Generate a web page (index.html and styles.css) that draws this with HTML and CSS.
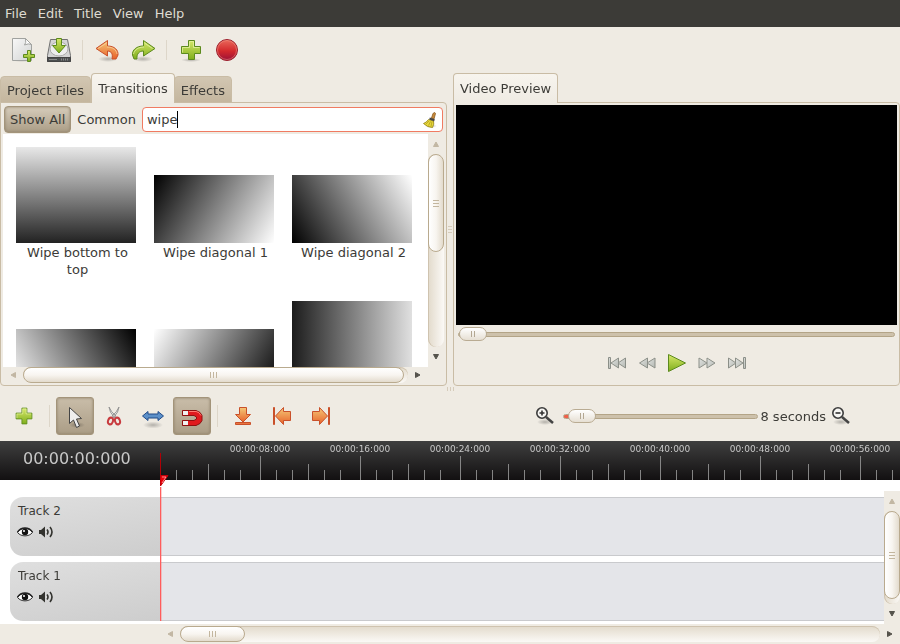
FILE: index.html
```html
<!DOCTYPE html>
<html lang="en">
<head>
<meta charset="utf-8">
<title>Video Editor</title>
<link rel="stylesheet" href="styles.css">
</head>
<body>
<svg class="defs" width="0" height="0" aria-hidden="true">
  <defs>
    <linearGradient id="green" x1="0" y1="0" x2="0" y2="1"><stop offset="0" stop-color="#d6e86a"/><stop offset="1" stop-color="#7fae1c"/></linearGradient>
    <linearGradient id="orange" x1="0" y1="0" x2="0" y2="1"><stop offset="0" stop-color="#f4c878"/><stop offset="1" stop-color="#e8622a"/></linearGradient>
    <linearGradient id="red" x1="0" y1="0" x2="0" y2="1"><stop offset="0" stop-color="#ea6a5c"/><stop offset=".55" stop-color="#d3282c"/><stop offset="1" stop-color="#9a1038"/></linearGradient>
    <linearGradient id="paper" x1="0" y1="0" x2="1" y2="1"><stop offset="0" stop-color="#f8f8f8"/><stop offset="1" stop-color="#d2d4d3"/></linearGradient>
    <linearGradient id="media" x1="0" y1="0" x2="1" y2="1"><stop offset="0" stop-color="#e2e4e2"/><stop offset="1" stop-color="#b4b8b2"/></linearGradient>
    <radialGradient id="shade"><stop offset="0" stop-color="#000" stop-opacity=".25"/><stop offset="1" stop-color="#000" stop-opacity="0"/></radialGradient>
    <symbol id="plus" viewBox="0 0 24 24">
      <path d="M9.500 2.500h6v6h6v7h-6v6h-6v-6h-7v-7h7z" fill="url(#green)" stroke="#5c8a1e"/>
      <path d="M3.500 14.500v-5h7v-6h4v6h6" fill="none" stroke="#eaf5a8" stroke-opacity=".7"/>
    </symbol>
    <symbol id="eye" viewBox="0 0 16 12">
      <path d="M.500 6.500C4 1 12 1 15.500 6.500 12 11 4 11 .500 6.500z" fill="#fff" stroke="#333" stroke-width="1"/>
      <path d="M.500 6C4 .500 12 .500 15.500 6" fill="none" stroke="#222" stroke-width="1.500"/>
      <circle cx="8" cy="6" r="3.200" fill="#111"/><circle cx="7" cy="5" r="1" fill="#fff"/>
    </symbol>
    <symbol id="speaker" viewBox="0 0 16 12">
      <path d="M1 4h2l4-3.500v11L3 8H1z" fill="#33332f"/>
      <path d="M9 3.500q2 2.500 0 5M12 1q4 5 0 10" fill="none" stroke="#33332f" stroke-width="1.600"/>
    </symbol>
    <symbol id="ticks" viewBox="0 0 100 24">
      <path d="M.500 0v24M16.500 14v10M32.500 14v10M48.500 8v16M64.500 14v10M80.500 14v10" stroke="#858585" fill="none"/>
    </symbol>
    <symbol id="arrow" viewBox="0 0 8 8"><path d="M1.500 6.500L4 2 6.500 6.500z" fill="currentColor" stroke="currentColor"/></symbol>
  </defs>
</svg>

<nav class="menubar" aria-label="Main menu">
  <button>File</button><button>Edit</button><button>Title</button><button>View</button><button>Help</button>
</nav>

<div class="toolbar">
  <button class="tool" aria-label="New project">
    <svg width="24" height="24" viewBox="0 0 24 24"><ellipse cx="11" cy="22" rx="11" ry="2" fill="url(#shade)"/><path d="M1.500 .500h13l6 6v16h-19z" fill="url(#paper)" stroke="#a0a29f"/><path d="M14.500 .500q1 4.500-1 6.500 4-2 7-.500z" fill="#fff" stroke="#a0a29f"/><path d="M16.500 12.500h3v4h4v3h-4v4h-3v-4h-4v-3h4z" fill="url(#green)" stroke="#5c8a1e"/></svg>
  </button>
  <button class="tool" aria-label="Save project">
    <svg width="26" height="26" viewBox="0 0 26 26"><path d="M4.500 2.500h17l3 16v6h-23v-6z" fill="#d4d4d4" stroke="#707070"/><ellipse cx="13" cy="12" rx="9" ry="7" fill="#eee" stroke="#aaa"/><path d="M1.500 20.500h23v4h-23z" fill="#4c4f50" stroke="#444"/><path d="M3 22.500h8" stroke="#888"/><path d="M15 22.500h8" stroke="#888" stroke-width="2" stroke-dasharray="1 1"/><path d="M10.500 1.500h5v7h4L13 16 6.500 8.500h4z" fill="url(#green)" stroke="#5c8a1e"/></svg>
  </button>
  <span class="sep"></span>
  <button class="tool" aria-label="Undo">
    <svg width="26" height="26" viewBox="0 0 26 26"><ellipse cx="14" cy="22" rx="10" ry="3" fill="url(#shade)"/><path d="M13.500 3.500v5.500c7 0 11 4 10.500 9l-2 4h-4c1-5-.500-8-4.500-8v5L2 11.500z" fill="url(#orange)" stroke="#c9502a"/><path d="M12.500 6L4 11.500M13 10c6 0 9.500 3 10 7" stroke="#fbd7a6" fill="none" opacity=".7"/></svg>
  </button>
  <button class="tool" aria-label="Redo">
    <svg width="26" height="26" viewBox="0 0 26 26"><ellipse cx="13" cy="22" rx="10" ry="3" fill="url(#shade)"/><path d="M13.500 3.500v5.500c-7 0-11.500 4-11 9l1.500 4h3c-.500-5 2-8 6.500-8v5L25 11.500z" fill="url(#green)" stroke="#5c8a1e"/><path d="M14.500 6l8 5.500M14 10c-6 0-9.500 3-10.500 7" stroke="#ecf6b4" fill="none" opacity=".7"/></svg>
  </button>
  <span class="sep"></span>
  <button class="tool" aria-label="Import files"><svg width="24" height="24"><ellipse cx="12" cy="22" rx="10" ry="2" fill="url(#shade)"/><use href="#plus"/></svg></button>
  <button class="tool" aria-label="Export video">
    <svg width="24" height="24" viewBox="0 0 24 24"><circle cx="12" cy="12" r="10.500" fill="url(#red)" stroke="#9c1f2c"/><circle cx="12" cy="12" r="9.500" fill="none" stroke="#f19a8c" opacity=".5"/></svg>
  </button>
</div>

<main class="workspace">
  <section class="notebook">
    <div class="tabs" role="tablist">
      <button class="tab" role="tab">Project Files</button><button class="tab selected" role="tab" aria-selected="true">Transitions</button><button class="tab" role="tab">Effects</button>
    </div>
    <div class="page">
      <div class="filters">
        <button class="filter pressed" aria-pressed="true">Show All</button>
        <button class="filter">Common</button>
        <div class="search">
          <input type="text" value="wipe" aria-label="Filter transitions" autofocus>
          <span class="caret"></span>
          <button class="clear" aria-label="Clear filter">
            <svg width="16" height="16" viewBox="0 0 16 16"><ellipse cx="9" cy="14" rx="6" ry="2" fill="url(#shade)"/><path d="M9.500 6L11 1.500q2-2 2.500 0L12 7z" fill="#c98a3c" stroke="#8a5a1e" stroke-width=".800"/><path d="M6.500 7.500L11.500 9q1 3-1 6.500-5 0-9-4 3-1 5-4z" fill="#e8d83c" stroke="#8f7f10" stroke-width=".800"/><path d="M4 12l3-3M6.500 13.500l2-4M9 14.500l1-5" stroke="#a8961c" stroke-width=".700"/><path d="M7.500 6.500l5 1.800" stroke="#444" stroke-width="2"/></svg>
          </button>
        </div>
      </div>
      <div class="browser">
        <div class="thumbs">
          <figure class="thumb"><div class="slot"><div class="pic tall bottom-top"></div></div><figcaption>Wipe bottom to top</figcaption></figure>
          <figure class="thumb"><div class="slot"><div class="pic diagonal-1"></div></div><figcaption>Wipe diagonal 1</figcaption></figure>
          <figure class="thumb"><div class="slot"><div class="pic diagonal-2"></div></div><figcaption>Wipe diagonal 2</figcaption></figure>
          <figure class="thumb"><div class="slot"><div class="pic diagonal-3"></div></div></figure>
          <figure class="thumb"><div class="slot"><div class="pic diagonal-4"></div></div></figure>
          <figure class="thumb"><div class="slot"><div class="pic tall left-right"></div></div></figure>
        </div>
        <div class="scroll vertical">
          <button class="step off" aria-label="Scroll up"><svg width="8" height="8"><use href="#arrow"/></svg></button>
          <div class="trough"><div class="handle" style="height:51%"></div></div>
          <button class="step down" aria-label="Scroll down"><svg width="8" height="8"><use href="#arrow"/></svg></button>
        </div>
        <div class="scroll horizontal">
          <button class="step left off" aria-label="Scroll left"><svg width="8" height="8"><use href="#arrow"/></svg></button>
          <div class="trough"><div class="handle" style="width:99%"></div></div>
          <button class="step right" aria-label="Scroll right"><svg width="8" height="8"><use href="#arrow"/></svg></button>
        </div>
      </div>
    </div>
  </section>

  <div class="splitter"></div>

  <section class="notebook">
    <div class="tabs" role="tablist"><button class="tab selected" role="tab" aria-selected="true">Video Preview</button></div>
    <div class="page preview">
      <div class="video"></div>
      <input class="slider" type="range" min="0" max="1000" value="0" aria-label="Position">
      <div class="transport">
        <button aria-label="Jump to start"><svg width="20" height="14" viewBox="0 0 20 14"><g fill="url(#media)" stroke="#8b8f88"><path d="M1.500 1.500h2v11h-2z"/><path d="M11.500 2v10L4 7z"/><path d="M18.500 2v10L11 7z"/></g></svg></button>
        <button aria-label="Rewind"><svg width="20" height="14" viewBox="0 0 20 14"><g fill="url(#media)" stroke="#8b8f88"><path d="M10.500 2v10L2.500 7z"/><path d="M18 2v10L10 7z"/></g></svg></button>
        <button aria-label="Play"><svg width="20" height="20" viewBox="0 0 20 20"><path d="M1.500 1.500L18.500 10 1.500 18.500z" fill="url(#green)" stroke="#5c8a1e"/></svg></button>
        <button aria-label="Fast forward"><svg width="20" height="14" viewBox="0 0 20 14"><g fill="url(#media)" stroke="#8b8f88"><path d="M10 2v10l8-5z"/><path d="M2 2v10l8-5z"/></g></svg></button>
        <button aria-label="Jump to end"><svg width="20" height="14" viewBox="0 0 20 14"><g fill="url(#media)" stroke="#8b8f88"><path d="M16.500 1.500h2v11h-2z"/><path d="M8.500 2v10L16 7z"/><path d="M1.500 2v10L9 7z"/></g></svg></button>
      </div>
    </div>
  </section>
</main>
<div class="splitter row"></div>

<div class="toolbar edit">
  <button class="tool" aria-label="Add track"><svg width="20" height="20"><use href="#plus"/></svg></button>
  <span class="sep"></span>
  <button class="tool pressed" aria-label="Select" aria-pressed="true">
    <svg width="24" height="24" viewBox="0 0 24 24"><ellipse cx="14" cy="21" rx="8" ry="3" fill="url(#shade)"/><path d="M6.500 3.500v16l4-3.500 3 7.500 3-1.500-3-7 5-.500z" fill="#eee" stroke="#444"/></svg>
  </button>
  <button class="tool" aria-label="Razor">
    <svg width="16" height="20" viewBox="0 0 16 20"><path d="M3 1q0 5 6 11l1-2Q5 6 3 1zM13 1q0 5-6 11l-1-2q5-4 7-9z" fill="#ddd" stroke="#888" stroke-width=".800"/><g fill="none" stroke="#c83a3e" stroke-width="2"><ellipse cx="4.500" cy="15" rx="2.400" ry="3.400" transform="rotate(20 4.500 15)"/><ellipse cx="11.500" cy="15" rx="2.400" ry="3.400" transform="rotate(-20 11.500 15)"/></g></svg>
  </button>
  <button class="tool" aria-label="Resize">
    <svg width="24" height="24" viewBox="0 0 24 24"><ellipse cx="12" cy="21" rx="10" ry="3.500" fill="url(#shade)"/><path d="M1.500 12L7 7.500V10h10V7.500l5.500 4.500L17 16.500V14H7v2.500z" fill="#5b8fc8" stroke="#204a87"/></svg>
  </button>
  <button class="tool pressed" aria-label="Snap" aria-pressed="true">
    <svg width="24" height="24" viewBox="0 0 24 24"><path d="M2.500 6.500H16l4 2 2 3v5l-2 3-4 2H2.500v-5H14l2.500-1.500v-2L14 11.500H2.500z" fill="#e01a1e" stroke="#8e1010"/><path d="M3 7h5v4H3zM3 17h5v4H3z" fill="#f0f0f0"/><path d="M9 7.500h7q3.500.500 5 4" fill="none" stroke="#ff7a70"/></svg>
  </button>
  <span class="sep"></span>
  <button class="tool" aria-label="Add marker">
    <svg width="20" height="20" viewBox="0 0 20 20"><path d="M6.500 1.500h7v7h4L10 16 2.500 8.500h4z" fill="url(#orange)" stroke="#c9502a"/><path d="M2.500 16.500h15v2h-15z" fill="#e8753f" stroke="#c9502a"/></svg>
  </button>
  <button class="tool" aria-label="Previous marker">
    <svg width="20" height="20" viewBox="0 0 20 20"><path d="M18.500 5.500v9h-7v4L3.500 10l8-8.500v4z" fill="url(#orange)" stroke="#c9502a"/><path d="M1.500 1.500h1v17h-1z" fill="#e8753f" stroke="#c9502a"/></svg>
  </button>
  <button class="tool" aria-label="Next marker">
    <svg width="20" height="20" viewBox="0 0 20 20"><path d="M1.500 5.500v9h7v4l8-8.500-8-8.500v4z" fill="url(#orange)" stroke="#c9502a"/><path d="M17.500 1.500h1v17h-1z" fill="#e8753f" stroke="#c9502a"/></svg>
  </button>
  <div class="zoom">
    <button aria-label="Zoom in"><svg width="20" height="20" viewBox="0 0 20 20"><ellipse cx="10" cy="16" rx="8" ry="3" fill="url(#shade)"/><path d="M11 11l7 6" stroke="#444" stroke-width="2.500"/><circle cx="7" cy="7" r="5.200" fill="#f7f6f3" stroke="#3c3c3c" stroke-width="1.600"/><path d="M4.500 7h5M7 4.500v5" stroke="#333" stroke-width="1.600"/></svg></button>
    <input class="slider filled" id="scale" type="range" min="0" max="1000" value="24">
    <label for="scale">8 seconds</label>
    <button aria-label="Zoom out"><svg width="20" height="20" viewBox="0 0 20 20"><ellipse cx="10" cy="16" rx="8" ry="3" fill="url(#shade)"/><path d="M11 11l7 6" stroke="#444" stroke-width="2.500"/><circle cx="7" cy="7" r="5.200" fill="#f7f6f3" stroke="#3c3c3c" stroke-width="1.600"/><path d="M4.500 7h5" stroke="#333" stroke-width="1.600"/></svg></button>
  </div>
</div>

<section class="timeline">
  <div class="ruler">
    <div class="clock">00:00:00:000</div>
    <div class="scale">
      <div class="mark"><svg width="100" height="24"><use href="#ticks"/></svg></div>
      <div class="mark"><span>00:00:08:000</span><svg width="100" height="24"><use href="#ticks"/></svg></div>
      <div class="mark"><span>00:00:16:000</span><svg width="100" height="24"><use href="#ticks"/></svg></div>
      <div class="mark"><span>00:00:24:000</span><svg width="100" height="24"><use href="#ticks"/></svg></div>
      <div class="mark"><span>00:00:32:000</span><svg width="100" height="24"><use href="#ticks"/></svg></div>
      <div class="mark"><span>00:00:40:000</span><svg width="100" height="24"><use href="#ticks"/></svg></div>
      <div class="mark"><span>00:00:48:000</span><svg width="100" height="24"><use href="#ticks"/></svg></div>
      <div class="mark"><span>00:00:56:000</span><svg width="100" height="24"><use href="#ticks"/></svg></div>
    </div>
  </div>
  <div class="body">
    <div class="tracks">
      <div class="track">
        <div class="head"><div class="name">Track 2</div><div class="toggles"><button aria-label="Toggle video"><svg width="16" height="12"><use href="#eye"/></svg></button><button aria-label="Toggle audio"><svg width="16" height="12"><use href="#speaker"/></svg></button></div></div>
        <div class="lane"></div>
      </div>
      <div class="track">
        <div class="head"><div class="name">Track 1</div><div class="toggles"><button aria-label="Toggle video"><svg width="16" height="12"><use href="#eye"/></svg></button><button aria-label="Toggle audio"><svg width="16" height="12"><use href="#speaker"/></svg></button></div></div>
        <div class="lane"></div>
      </div>
    </div>
    <div class="scroll vertical">
      <button class="step off" aria-label="Scroll up"><svg width="8" height="8"><use href="#arrow"/></svg></button>
      <div class="trough"><div class="handle" style="height:95%"></div></div>
      <button class="step down" aria-label="Scroll down"><svg width="8" height="8"><use href="#arrow"/></svg></button>
    </div>
  </div>
  <svg class="playhead" width="10" height="168" viewBox="0 0 10 168"><path d="M.500 0v23" stroke="#b00006"/><path d="M.500 34v134" stroke="#ff5c5c"/><path d="M1.500 34v134" stroke="#ff5c5c" stroke-opacity=".3"/><path d="M.500 22.500h7.500L.500 33z" fill="#e80008" stroke="#c00008"/><path d="M2 24h4L2 30" fill="none" stroke="#ffb0b0" stroke-width=".800"/></svg>
</section>
<footer class="hbar">
  <div class="scroll horizontal">
    <button class="step left off" aria-label="Scroll left"><svg width="8" height="8"><use href="#arrow"/></svg></button>
    <div class="trough"><div class="handle" style="width:9.300%"></div></div>
    <button class="step right" aria-label="Scroll right"><svg width="8" height="8"><use href="#arrow"/></svg></button>
  </div>
</footer>
</body>
</html>
```

FILE: styles.css
```css
* { box-sizing: border-box; }
body {
  margin: 0;
  height: 100vh;
  display: flex;
  flex-direction: column;
  overflow: hidden;
  background: #efebe3;
  color: #3c3b37;
  font: 13px/17px "DejaVu Sans", sans-serif;
}
button {
  margin: 0;
  padding: 0;
  border: 0;
  background: none;
  color: inherit;
  font: inherit;
}
svg { display: block; flex: none; }
.defs { position: absolute; }

.menubar {
  display: flex;
  gap: 11px;
  height: 27px;
  flex: none;
  padding: 0 5px;
  background: #3c3b37;
  color: #dfdbd2;
}

.toolbar {
  display: flex;
  align-items: center;
  flex: none;
  height: 46px;
  padding: 0 5px;
}
.tool {
  display: flex;
  align-items: center;
  justify-content: center;
  width: 36px;
  height: 38px;
  border-radius: 3px;
}
.sep {
  width: 1px;
  height: 20px;
  margin: 0 5px;
  background: #ddd6c9;
}
.toolbar:not(.edit) .sep { margin: 0 6px 0 5px; }
.edit { height: 50px; gap: 1px; }
.edit .tool { width: 38px; }
.edit .sep { height: 22px; }
.pressed {
  border: 1px solid #a3947a;
  background: linear-gradient(#c9bda9, #ab9d86);
  box-shadow: inset 0 0 3px #8f8069;
}

.workspace {
  display: flex;
  flex: 1 1 0;
  min-height: 0;
}
.notebook {
  display: flex;
  flex-direction: column;
  flex: 1 1 0;
  min-width: 0;
}
.tabs {
  display: flex;
  align-items: flex-end;
  height: 30px;
  flex: none;
  margin-bottom: -1px;
  position: relative;
}
.tab {
  height: 27px;
  padding: 1px 6px 0;
  border: 1px solid #c9bca5;
  border-radius: 4px 4px 0 0;
  background: linear-gradient(#d2c6b2, #c4b69e);
}
.tab.selected {
  height: 30px;
  padding: 0 6px;
  border-bottom: 0;
  background: linear-gradient(#f7f4ee, #efebe3);
}
.tab.selected + .tab { margin-left: -1px; }
.page {
  display: flex;
  flex-direction: column;
  flex: 1 1 0;
  min-height: 0;
  padding: 2px;
  border: 1px solid #c9bca5;
  border-radius: 0 4px 4px 4px;
}
.filters {
  display: flex;
  align-items: center;
  gap: 6px;
  height: 29px;
  flex: none;
  padding: 0 1px;
}
.filter { height: 27px; }
.filter.pressed { padding: 0 5px; border-radius: 4px; background: linear-gradient(#d6ccbb, #ab9d86); }
.search {
  display: flex;
  align-items: center;
  flex: 1;
  height: 25px;
  padding: 0 4px;
  border: 1px solid #f07b62;
  border-radius: 4px;
  background: #fff;
}
.search input {
  field-sizing: content;
  padding: 0;
  border: 0;
  outline: 0;
  background: none;
  color: inherit;
  caret-color: transparent;
  font: inherit;
}
.caret { width: 1px; height: 17px; background: #000; }
.clear { margin-left: auto; }

.browser {
  display: grid;
  grid-template: minmax(0, 1fr) 16px / minmax(0, 1fr) 16px;
  flex: 1 1 0;
  min-height: 0;
}
.thumbs {
  display: grid;
  grid-template-columns: repeat(auto-fill, 120px);
  align-content: start;
  gap: 22px 18px;
  padding: 13px;
  overflow: hidden;
  background: #fff;
}
.thumb { margin: 0; min-height: 132px; text-align: center; }
.slot { display: flex; align-items: flex-end; height: 96px; margin-bottom: 1px; }
.thumb figcaption { padding: 0 3px 0 6px; }
.pic { width: 100%; height: 68px; }
.pic.tall { height: 96px; }
.bottom-top { background: linear-gradient(#e8e8e8, #222); }
.diagonal-1 { background: linear-gradient(120deg, #000, #fff); }
.diagonal-2 { background: linear-gradient(60deg, #000, #fff); }
.diagonal-3 { background: linear-gradient(60deg, #fff, #000); }
.diagonal-4 { background: linear-gradient(120deg, #fff, #000); }
.left-right { background: linear-gradient(90deg, #1c1c1c, #e0e0e0); }

.scroll { display: flex; }
.scroll.vertical { flex-direction: column; width: 16px; }
.scroll.horizontal { height: 16px; }
.step {
  display: flex;
  align-items: center;
  justify-content: center;
  flex: none;
  width: 16px;
  height: 20px;
  color: #55534c;
}
.horizontal .step { width: 20px; height: 16px; }
.step.off { color: #c2b7a3; }
.down svg { transform: rotate(180deg); }
.left svg { transform: rotate(-90deg); }
.right svg { transform: rotate(90deg); }
.trough {
  flex: 1;
  min-height: 0;
  border-radius: 8px;
  background: linear-gradient(90deg, #e2dacb, #fbf9f6);
  box-shadow: inset 1px 0 #cfc3af;
}
.horizontal .trough {
  background: linear-gradient(#e2dacb, #fbf9f6);
  box-shadow: inset 0 1px #cfc3af;
}
.handle {
  display: flex;
  align-items: center;
  justify-content: center;
  height: 100%;
  border: 1px solid #b9aa8e;
  border-radius: 8px;
  background: linear-gradient(90deg, #fff, #f8f5f0 50%, #e3dbcd);
}
.horizontal .handle { background: linear-gradient(#fff, #f8f5f0 50%, #e3dbcd); }
.handle::before {
  content: "";
  width: 6px;
  height: 7px;
  background: repeating-linear-gradient(#c3b69e 0 1px, transparent 1px 3px);
}
.horizontal .handle::before {
  width: 7px;
  height: 6px;
  background: repeating-linear-gradient(90deg, #c3b69e 0 1px, transparent 1px 3px);
}

.splitter {
  display: flex;
  align-items: center;
  justify-content: center;
  width: 6px;
}
.splitter::before {
  content: "";
  width: 4px;
  height: 7px;
  background: repeating-linear-gradient(#d5cbba 0 1px, transparent 1px 3px);
}
.splitter.row { width: auto; height: 5px; flex: none; }
.splitter.row::before {
  width: 7px;
  height: 4px;
  background: repeating-linear-gradient(90deg, #d5cbba 0 1px, transparent 1px 3px);
}

.video { flex: 1; min-height: 0; background: #000; }
.slider {
  appearance: none;
  height: 14px;
  flex: none;
  margin: 2px;
  background: none;
}
.slider::-webkit-slider-runnable-track {
  height: 5px;
  border: 1px solid #b3a487;
  border-radius: 3px;
  background: #cdc1ab;
}
.slider.filled::-webkit-slider-runnable-track { background: linear-gradient(90deg, #f0604a 10px, #cdc1ab 10px); }
.slider::-webkit-slider-thumb {
  appearance: none;
  width: 28px;
  height: 14px;
  margin-top: -6px;
  border: 1px solid #b9ab92;
  border-radius: 7px;
  background:
    linear-gradient(#b3a792, #b3a792) 11px 3px / 1px 6px no-repeat,
    linear-gradient(#b3a792, #b3a792) 14px 3px / 1px 6px no-repeat,
    linear-gradient(#fff, #e6dfd3);
}
.transport {
  display: flex;
  justify-content: center;
  align-items: center;
  gap: 10px;
  flex: none;
  height: 40px;
}

.zoom {
  display: flex;
  align-items: center;
  margin-left: auto;
  margin-right: 44px;
}
.zoom .slider { width: 195px; margin: 0 2px 0 8px; }
.zoom label { margin-right: 5px; }

.timeline { position: relative; flex: none; background: #fff; }
.ruler {
  display: flex;
  height: 39px;
  overflow: hidden;
  background: linear-gradient(#3f3f3f, #121011);
  color: #c8c8c8;
}
.clock {
  width: 160px;
  flex: none;
  padding: 8px 0 0 23px;
  font-size: 16px;
  line-height: 20px;
}
.scale { display: flex; flex: 1; min-width: 0; }
.mark {
  display: flex;
  flex-direction: column;
  justify-content: flex-end;
  width: 100px;
  flex: none;
}
.mark span {
  align-self: flex-start;
  width: 100px;
  margin-left: -50px;
  text-align: center;
  font-size: 9px;
  line-height: 13px;
}
.body { display: flex; }
.tracks {
  display: flex;
  flex-direction: column;
  gap: 6px;
  flex: 1;
  padding: 17px 0 3px 10px;
}
.track { display: flex; height: 59px; }
.head {
  width: 150px;
  flex: none;
  padding: 6px 7px;
  border-radius: 13px 0 0 13px;
  background: linear-gradient(170deg, #dfdfdf, #cdcdcd);
  font-size: 12px;
}
.name { padding-left: 1px; }
.toggles { display: flex; gap: 5px; margin-top: 6px; }
.lane {
  flex: 1;
  border: solid #c9cacd;
  border-width: 1px 0;
  background: #e4e5e9;
}
.body .scroll { margin-top: 11px; background: #efebe3; }
.playhead { position: absolute; left: 160px; top: 12px; }
.hbar { flex: none; height: 20px; padding: 2px 0 2px 160px; }
```
